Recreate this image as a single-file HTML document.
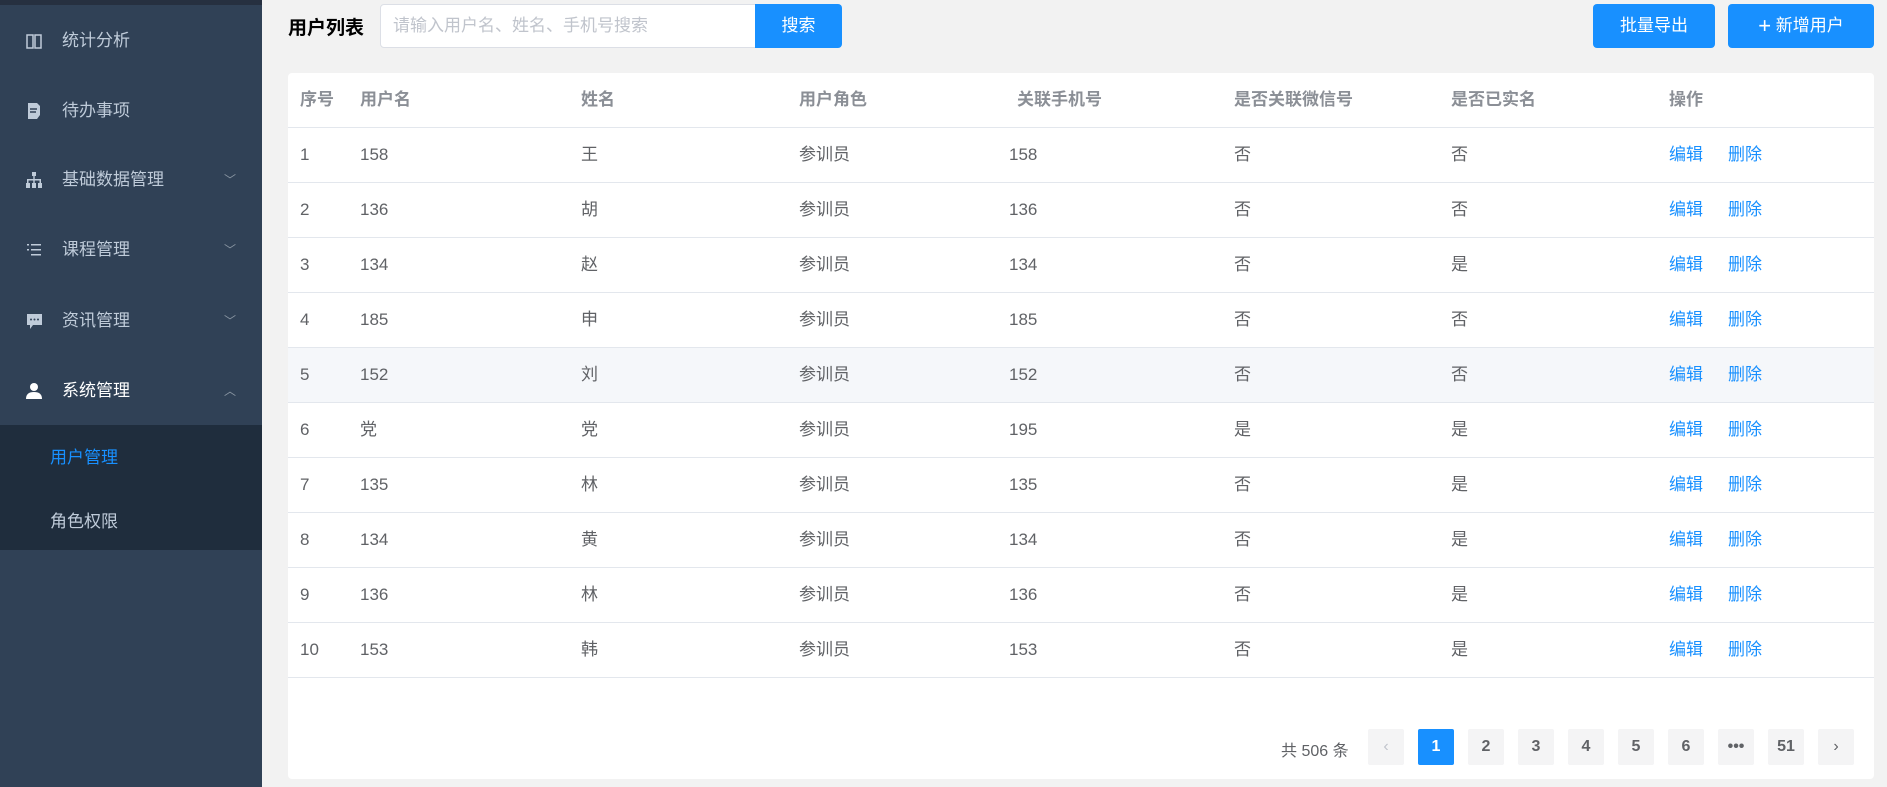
<!DOCTYPE html><html><head><meta charset="utf-8"><style>
*{margin:0;padding:0;box-sizing:border-box}
body{width:1887px;height:787px;background:#f2f2f2;font-family:"Liberation Sans","Noto Sans CJK SC",sans-serif;position:relative;overflow:hidden;font-size:17px}
.side{position:absolute;left:0;top:0;width:262px;height:787px;background:#304156;border-top:5px solid #263040}
.mi{position:absolute;left:0;width:262px;color:#bfcbd9;font-size:17px;height:30px;line-height:30px}
.mi .ic{position:absolute;left:25px;top:6px;width:18px;height:18px}
.mi .t{position:absolute;left:62px}
.mi .ar{position:absolute;left:224px;top:0;color:#8a96a3;font-size:12px}
.sub{position:absolute;left:0;top:420px;width:262px;height:125px;background:#1f2d3d}
.sub div{position:absolute;left:50px;font-size:17px;color:#bfcbd9}
.abs{position:absolute}
.btn{position:absolute;background:#1890ff;color:#fff;border-radius:4px;text-align:center;line-height:44px;font-size:17px;top:4px;height:44px}
.card{position:absolute;left:288px;top:73px;width:1586px;height:706px;background:#fff;border-radius:4px}
.row{position:absolute;left:0;width:1586px;height:55px;border-bottom:1px solid #e3e7ed;color:#606266}
.row span{position:absolute;top:17px;line-height:20px}
.hd{color:#8b8f96;font-weight:bold}
.lk{color:#1890ff}
.pg{position:absolute;top:729px;width:36px;height:36px;background:#f4f4f5;border-radius:2px;text-align:center;line-height:36px;font-weight:bold;color:#606266;font-size:16px}
</style></head><body>
<div class="side">
<div class="mi" style="top:21px"><svg class="ic" viewBox="0 0 18 18"><path d="M2 3h6v13H2zM10 3h6v13h-6z" fill="none" stroke="#bfcbd9" stroke-width="1.5"/></svg><span class="t">统计分析</span></div>
<div class="mi" style="top:91px"><svg class="ic" viewBox="0 0 18 18"><path d="M3 1h9l3 3v9l-3 4H3z" fill="#bfcbd9"/><path d="M5 7h7M5 10h6" stroke="#304156" stroke-width="1.5"/></svg><span class="t">待办事项</span></div>
<div class="mi" style="top:160px"><svg class="ic" viewBox="0 0 18 18"><path d="M7 1h4v4H7zM8.3 5h1.4v3H8.3zM2 8h14v1.5H2zM2 9h1.5v3H2zM8.3 9h1.4v3H8.3zM14.5 9H16v3h-1.5zM1 12h4v5H1zM7 12h4v5H7zM13 12h4v5h-4z" fill="#bfcbd9"/></svg><span class="t">基础数据管理</span><span class="ar">﹀</span></div>
<div class="mi" style="top:230px"><svg class="ic" viewBox="0 0 18 18"><path d="M2 3h2v1.5H2zM6 3h10v1.5H6zM6 8h10v1.5H6zM6 13h10v1.5H6zM2 8h2v1.5H2z" fill="#bfcbd9"/></svg><span class="t">课程管理</span><span class="ar">﹀</span></div>
<div class="mi" style="top:301px"><svg class="ic" viewBox="0 0 18 18"><path d="M2 2h15v11H8l-3 4v-4H2z" fill="#bfcbd9"/><circle cx="6" cy="7.5" r="1" fill="#304156"/><circle cx="9.5" cy="7.5" r="1" fill="#304156"/><circle cx="13" cy="7.5" r="1" fill="#304156"/></svg><span class="t">资讯管理</span><span class="ar">﹀</span></div>
<div class="mi" style="top:371px;color:#fff"><svg class="ic" viewBox="0 0 18 18"><circle cx="9" cy="5" r="4" fill="#fff"/><path d="M1 17c0-5 3-7 8-7s8 2 8 7z" fill="#fff"/></svg><span class="t">系统管理</span><span class="ar">︿</span></div>
<div class="sub"><div style="top:18px;color:#1890ff">用户管理</div><div style="top:82px">角色权限</div></div>
</div>
<div class="abs" style="left:288px;top:13px;font-size:19px;font-weight:bold;color:#000">用户列表</div>
<div class="abs" style="left:380px;top:4px;width:380px;height:44px;border:1px solid #dcdfe6;border-radius:4px 0 0 4px;background:#fff;color:#c0c4cc;line-height:42px;padding-left:12px;font-size:17px">请输入用户名、姓名、手机号搜索</div>
<div class="btn" style="left:755px;width:87px;border-radius:0 4px 4px 0">搜索</div>
<div class="btn" style="left:1593px;width:122px">批量导出</div>
<div class="btn" style="left:1728px;width:146px"><span style="font-size:22px;vertical-align:-2px">+</span> 新增用户</div>
<div class="card">
<div class="row hd" style="top:0"><span style="left:12px">序号</span><span style="left:72px">用户名</span><span style="left:293px">姓名</span><span style="left:511px">用户角色</span><span style="left:729px">关联手机号</span><span style="left:946px">是否关联微信号</span><span style="left:1163px">是否已实名</span><span style="left:1381px">操作</span></div>
<div class="row" style="top:55px"><span style="left:12px">1</span><span style="left:72px">158</span><span style="left:293px">王</span><span style="left:511px">参训员</span><span style="left:721px">158</span><span style="left:946px">否</span><span style="left:1163px">否</span><span class="lk" style="left:1381px">编辑</span><span class="lk" style="left:1440px">删除</span></div>
<div class="row" style="top:110px"><span style="left:12px">2</span><span style="left:72px">136</span><span style="left:293px">胡</span><span style="left:511px">参训员</span><span style="left:721px">136</span><span style="left:946px">否</span><span style="left:1163px">否</span><span class="lk" style="left:1381px">编辑</span><span class="lk" style="left:1440px">删除</span></div>
<div class="row" style="top:165px"><span style="left:12px">3</span><span style="left:72px">134</span><span style="left:293px">赵</span><span style="left:511px">参训员</span><span style="left:721px">134</span><span style="left:946px">否</span><span style="left:1163px">是</span><span class="lk" style="left:1381px">编辑</span><span class="lk" style="left:1440px">删除</span></div>
<div class="row" style="top:220px"><span style="left:12px">4</span><span style="left:72px">185</span><span style="left:293px">申</span><span style="left:511px">参训员</span><span style="left:721px">185</span><span style="left:946px">否</span><span style="left:1163px">否</span><span class="lk" style="left:1381px">编辑</span><span class="lk" style="left:1440px">删除</span></div>
<div class="row" style="top:275px;background:#f5f7fa"><span style="left:12px">5</span><span style="left:72px">152</span><span style="left:293px">刘</span><span style="left:511px">参训员</span><span style="left:721px">152</span><span style="left:946px">否</span><span style="left:1163px">否</span><span class="lk" style="left:1381px">编辑</span><span class="lk" style="left:1440px">删除</span></div>
<div class="row" style="top:330px"><span style="left:12px">6</span><span style="left:72px">党</span><span style="left:293px">党</span><span style="left:511px">参训员</span><span style="left:721px">195</span><span style="left:946px">是</span><span style="left:1163px">是</span><span class="lk" style="left:1381px">编辑</span><span class="lk" style="left:1440px">删除</span></div>
<div class="row" style="top:385px"><span style="left:12px">7</span><span style="left:72px">135</span><span style="left:293px">林</span><span style="left:511px">参训员</span><span style="left:721px">135</span><span style="left:946px">否</span><span style="left:1163px">是</span><span class="lk" style="left:1381px">编辑</span><span class="lk" style="left:1440px">删除</span></div>
<div class="row" style="top:440px"><span style="left:12px">8</span><span style="left:72px">134</span><span style="left:293px">黄</span><span style="left:511px">参训员</span><span style="left:721px">134</span><span style="left:946px">否</span><span style="left:1163px">是</span><span class="lk" style="left:1381px">编辑</span><span class="lk" style="left:1440px">删除</span></div>
<div class="row" style="top:495px"><span style="left:12px">9</span><span style="left:72px">136</span><span style="left:293px">林</span><span style="left:511px">参训员</span><span style="left:721px">136</span><span style="left:946px">否</span><span style="left:1163px">是</span><span class="lk" style="left:1381px">编辑</span><span class="lk" style="left:1440px">删除</span></div>
<div class="row" style="top:550px"><span style="left:12px">10</span><span style="left:72px">153</span><span style="left:293px">韩</span><span style="left:511px">参训员</span><span style="left:721px">153</span><span style="left:946px">否</span><span style="left:1163px">是</span><span class="lk" style="left:1381px">编辑</span><span class="lk" style="left:1440px">删除</span></div>
</div>
<div class="abs" style="left:1281px;top:737px;font-size:16px;color:#606266">共 506 条</div>
<div class="pg" style="left:1368px;color:#c0c4cc;font-weight:normal">‹</div>
<div class="pg" style="left:1418px;background:#1890ff;color:#fff">1</div>
<div class="pg" style="left:1468px">2</div>
<div class="pg" style="left:1518px">3</div>
<div class="pg" style="left:1568px">4</div>
<div class="pg" style="left:1618px">5</div>
<div class="pg" style="left:1668px">6</div>
<div class="pg" style="left:1718px">•••</div>
<div class="pg" style="left:1768px">51</div>
<div class="pg" style="left:1818px;font-weight:normal">›</div>
</body></html>
